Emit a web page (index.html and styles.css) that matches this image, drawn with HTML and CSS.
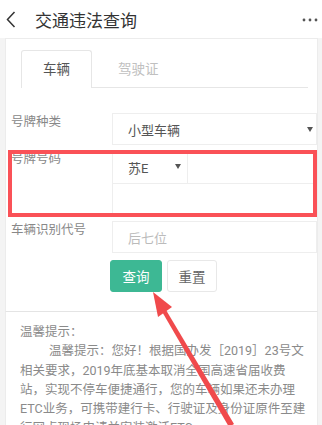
FILE: index.html
```html
<!DOCTYPE html>
<html lang="zh-CN">
<head>
    <meta charset="UTF-8">
    <meta name="viewport" content="width=device-width, initial-scale=1.0">
    <title>交通违法查询</title>
    <link rel="stylesheet" href="styles.css">
</head>
<body>
    <div class="top-bar">
        <svg class="back" width="10" height="17" viewBox="0 0 10 17">
            <path d="M8.5 1 L1.5 8.5 L8.5 16" fill="none" stroke="#333" stroke-width="1.5"/>
        </svg>
        <div class="title">交通违法查询</div>
        <svg class="more" width="16" height="4" viewBox="0 0 16 4">
            <circle cx="2" cy="2" r="1.4" fill="#555"/>
            <circle cx="8" cy="2" r="1.4" fill="#555"/>
            <circle cx="14" cy="2" r="1.4" fill="#555"/>
        </svg>
    </div>

    <div class="query-card">
        <div class="tabs">
            <div class="tab active">车辆</div>
            <div class="tab">驾驶证</div>
        </div>

        <div class="form-row">
            <div class="label">号牌种类</div>
            <div class="field">小型车辆<span class="caret"></span></div>
        </div>

        <div class="form-row plate-row">
            <div class="label">号牌号码</div>
            <div class="field-group">
                <div class="plate-top">
                    <div class="field short">苏E<span class="caret"></span></div>
                    <div class="field"></div>
                </div>
                <div class="field tall"></div>
            </div>
            <div class="mark-box"></div>
        </div>

        <div class="form-row">
            <div class="label">车辆识别代号</div>
            <div class="field placeholder">后七位</div>
        </div>

        <div class="buttons">
            <button class="btn primary">查询</button>
            <button class="btn">重置</button>
        </div>
    </div>

    <div class="tips">
        <div class="tips-title">温馨提示：</div>
        <p>温馨提示：您好！根据国办发［2019］23号文<br>相关要求，2019年底基本取消全国高速省届收费<br>站，实现不停车便捷通行，您的车辆如果还未办理<br>ETC业务，可携带建行卡、行驶证及身份证原件至建<br>行网点现场申请并安装激活ETC。</p>
    </div>

    <svg class="arrow" width="322" height="425" viewBox="0 0 322 425">
        <polygon points="153,292 172,307 158,317" fill="#f04a4c"/>
        <polygon points="166,310 162.5,312.5 229,427 234,424" fill="#f04a4c"/>
    </svg>
</body>
</html>
```

FILE: styles.css
```css
body {
    margin: 0;
    font-family: Roboto, "Noto Sans CJK SC", sans-serif;
    background-color: #f4f4f4;
    height: 425px;
    overflow: hidden;
    position: relative;
}
.top-bar {
    height: 38px;
    display: flex;
    align-items: center;
    background: #fff;
}
.back {
    margin-left: 6px;
    margin-top: 1px;
}
.title {
    margin-left: 19px;
    font-size: 17px;
    color: #333;
}
.more {
    margin-left: auto;
    margin-right: 4px;
    margin-top: 1px;
}
.query-card {
    margin: 0 4px 0 5px;
    padding: 11px 0 19px 0;
    background: #fff;
    border: 1px solid #ececec;
    border-bottom-color: #e4e4e4;
}
.tabs {
    display: flex;
    margin: 0 9px 0 15px;
    height: 37px;
    border-bottom: 1px solid #e6e6e6;
}
.tab {
    box-sizing: border-box;
    height: 38px;
    padding: 0 21px;
    margin-right: 4px;
    line-height: 37px;
    font-size: 13.5px;
    color: #c0c0c0;
    border: 1px solid transparent;
    border-bottom: none;
    border-radius: 3px 3px 0 0;
}
.tab.active {
    color: #555;
    background: #fff;
    border-color: #e6e6e6;
}
.form-row {
    display: flex;
    margin-top: 5px;
    position: relative;
}
.tabs + .form-row {
    margin-top: 25px;
}
.plate-row + .form-row {
    margin-top: 4px;
}
.label {
    width: 106px;
    flex-shrink: 0;
    padding-left: 5px;
    box-sizing: border-box;
    line-height: 18px;
    font-size: 12.5px;
    color: #888;
}
.field {
    flex: 1;
    position: relative;
    box-sizing: border-box;
    height: 32px;
    padding-left: 15px;
    display: flex;
    align-items: center;
    border: 1px solid #eee;
    font-size: 13px;
    color: #555;
}
.field.placeholder {
    color: #bbb;
}
.field-group {
    flex: 1;
    display: flex;
    flex-direction: column;
}
.plate-top {
    display: flex;
}
.plate-top .field {
    height: 34px;
}
.plate-top .field + .field {
    border-left: none;
}
.field.short {
    flex: none;
    width: 76px;
}
.field.tall {
    flex: none;
    height: 34px;
    margin-top: -1px;
}
.caret {
    position: absolute;
    right: 3px;
    top: 13px;
    border-left: 3.5px solid transparent;
    border-right: 3.5px solid transparent;
    border-top: 5px solid #555;
}
.field.short .caret {
    right: 6px;
}
.mark-box {
    position: absolute;
    left: 2px;
    top: 0;
    right: 0;
    bottom: 0;
    border: 4px solid #fa5157;
}
.buttons {
    display: flex;
    justify-content: center;
    gap: 5px;
    margin-top: 7px;
    padding-left: 4px;
}
.btn {
    box-sizing: border-box;
    height: 32px;
    width: 50px;
    padding: 0;
    font-family: inherit;
    font-size: 13.5px;
    color: #666;
    background: #fff;
    border: 1px solid #e8e8e8;
    border-radius: 3px;
}
.btn.primary {
    width: 52px;
    color: #fff;
    background: #3db894;
    border-color: #3db894;
}
.tips {
    margin: 0 4px 0 5px;
    padding: 10px 6px 0 14px;
    background: #fff;
    border-left: 1px solid #ececec;
    border-right: 1px solid #ececec;
    font-size: 12.5px;
    line-height: 19.3px;
    color: #8a8a8a;
    white-space: nowrap;
}
.tips p {
    margin: 0;
    text-indent: 29px;
}
.arrow {
    position: absolute;
    left: 0;
    top: 0;
    pointer-events: none;
}
```
